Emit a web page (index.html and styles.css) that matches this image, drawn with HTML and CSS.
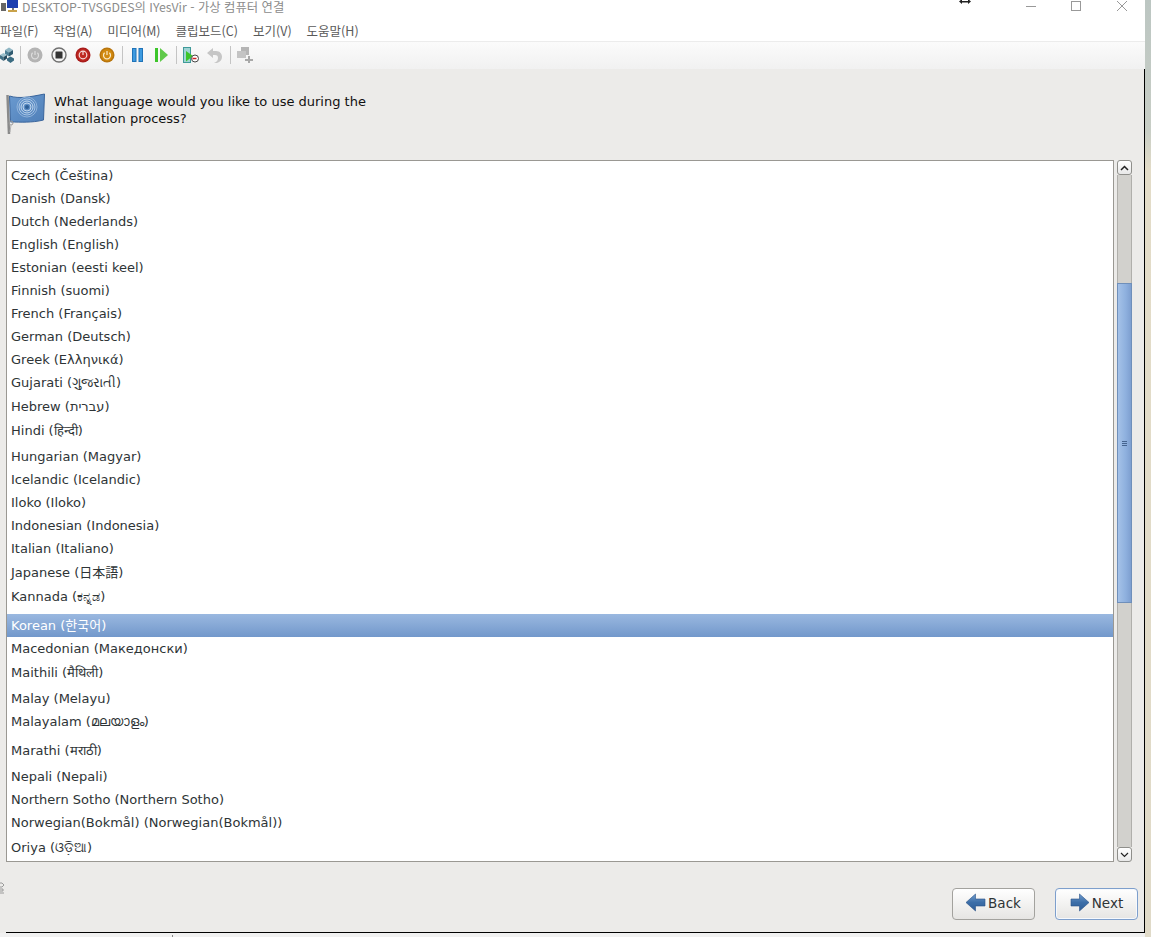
FILE: index.html
```html
<!DOCTYPE html>
<html lang="ko">
<head>
<meta charset="utf-8">
<title>IYesVir</title>
<link rel="stylesheet" href="styles.css">
</head>
<body>
<div class="window">
  <header class="titlebar">
    <svg class="appicon" width="20" height="14" viewBox="0 0 20 14"><rect x="0" y="3" width="5" height="8" fill="#666"/><rect x="6" y="0" width="11" height="8" fill="#1c3fb0"/><rect x="11" y="8" width="2" height="3" fill="#777"/><rect x="7" y="10" width="9" height="2" fill="#c9a24a"/></svg>
    <span class="title">DESKTOP-TVSGDES의 IYesVir - 가상 컴퓨터 연결</span>
    <svg class="resizecur" width="12" height="8" viewBox="0 0 12 8"><path d="M0 3.500 3 1v2h6V1l3 2.500L9 6V4.500H3V6z" fill="#222"/></svg>
    <div class="winbtns">
      <svg width="10" height="11" viewBox="0 0 10 11"><path d="M0 6.500h10" stroke="#999" fill="none"/></svg>
      <svg width="10" height="11" viewBox="0 0 10 11"><rect x=".5" y="1.500" width="9" height="9" stroke="#999" fill="none"/></svg>
      <svg class="closebtn" width="10" height="11" viewBox="0 0 10 11"><path d="M0 1l10 10M10 1 0 11" stroke="#999" fill="none"/></svg>
    </div>
  </header>
  <nav class="menubar">
    <span>파일(F)</span><span>작업(A)</span><span>미디어(M)</span><span>클립보드(C)</span><span>보기(V)</span><span>도움말(H)</span>
  </nav>
  <div class="toolbar">
    <svg class="tool t-cube" width="14" height="16" viewBox="0 0 14 16"><path d="M5 3l4-2.500L13 3 9 5.500z" fill="#8fb6c4"/><path d="M5 3v4l4 2.500v-4z" fill="#4d7f95"/><path d="M13 3v4L9 9.500v-4z" fill="#2f5a70"/><path d="M0 8l3.500-2L7 8l-3.500 2z" fill="#9cc0cc"/><path d="M0 8v3.500L3.500 14v-4z" fill="#3f6f85"/><path d="M7 8v3.500L3.500 14v-4z" fill="#24485c"/><path d="M7 11.500l3.500-2 3.500 2v2L10.500 16 7 13.500z" fill="#3b6c82"/></svg>
    <i class="sep s1"></i>
    <svg class="tool t-gray" width="16" height="16" viewBox="0 0 16 16"><circle cx="8" cy="8" r="7.500" fill="#b4b4b4"/><path d="M5.600 5.800a3.500 3.500 0 1 0 4.800 0" stroke="#ddd" stroke-width="1.200" fill="none"/><path d="M8 4v4" stroke="#ddd" stroke-width="1.200"/></svg>
    <svg class="tool t-stop" width="16" height="16" viewBox="0 0 16 16"><circle cx="8" cy="8" r="7" fill="#f4f4f4" stroke="#707070" stroke-width="1.400"/><rect x="4.500" y="4.500" width="7" height="7" rx=".5" fill="#333"/></svg>
    <svg class="tool t-red" width="16" height="16" viewBox="0 0 16 16"><circle cx="8" cy="8" r="7.500" fill="#a91c1c"/><circle cx="8" cy="8" r="6" fill="#bf2a22"/><circle cx="8" cy="8" r="3.800" stroke="#f6dcdc" stroke-width="1.200" fill="none"/><path d="M8 4v4" stroke="#f6dcdc" stroke-width="1.200"/></svg>
    <svg class="tool t-orange" width="16" height="16" viewBox="0 0 16 16"><circle cx="8" cy="8" r="7.500" fill="#b8750e"/><circle cx="8" cy="8" r="6" fill="#d1890f"/><path d="M5.600 5.800a3.500 3.500 0 1 0 4.800 0" stroke="#fbeccb" stroke-width="1.200" fill="none"/><path d="M8 4v4" stroke="#fbeccb" stroke-width="1.200"/></svg>
    <i class="sep s2"></i>
    <svg class="tool t-pause" width="11" height="14" viewBox="0 0 11 14"><rect x=".5" y=".5" width="3.500" height="13" fill="#3d9ae0" stroke="#1f73b8"/><rect x="7" y=".5" width="3.500" height="13" fill="#3d9ae0" stroke="#1f73b8"/></svg>
    <svg class="tool t-play" width="13" height="14" viewBox="0 0 13 14"><rect x="0" y="0" width="3" height="14" fill="#3cc52a"/><path d="M5 0l8 7-8 7z" fill="#5fc94a"/></svg>
    <i class="sep s3"></i>
    <svg class="tool t-snap" width="16" height="17" viewBox="0 0 16 17"><rect x=".5" y=".5" width="7" height="15" fill="#9fd4d4" stroke="#3f9a9a"/><path d="M3 4l7 5-7 5.500z" fill="#3cc52a"/><circle cx="12" cy="11.500" r="3.500" fill="#fff" stroke="#444"/><path d="M9.500 11.500h4" stroke="#c22" stroke-width="1.500"/></svg>
    <svg class="tool t-undo" width="16" height="15" viewBox="0 0 16 15"><path d="M0 5 6 0v3h3c4 0 6 3 6 6s-2 5-5 6H7c3-1 4-3 4-5s-1-3-3-3H6v3z" fill="#c6c6c6"/></svg>
    <i class="sep s4"></i>
    <svg class="tool t-share" width="16" height="16" viewBox="0 0 16 16"><rect x="4" y="0" width="8" height="8" fill="#b5b5b5"/><rect x="0" y="4" width="9" height="7" fill="#c4c4c4"/><path d="M8 12h8v2H8zM11 9h2v7h-2z" fill="#a8a8a8"/></svg>
  </div>
  <main class="content">
    <section class="question">
      <svg class="flag" width="40" height="42" viewBox="0 0 40 42">
        <defs><linearGradient id="flagfill" x1="0" y1="0" x2="1" y2="1"><stop offset="0" stop-color="#6a9ad0"/><stop offset="1" stop-color="#4f7fb8"/></linearGradient></defs>
        <path d="M1.500 3 3 42" stroke="#8a8a8a" stroke-width="2.500" fill="none"/>
        <path d="M3.500 4c10 3 20 1 35-2l-1 26c-12 3-23 2-33 2z" fill="url(#flagfill)" stroke="#3a659c"/>
        <circle cx="21" cy="15" r="10" fill="none" stroke="#8fb2da"/>
        <circle cx="21" cy="15" r="8" fill="none" stroke="#a9c6e6"/>
        <circle cx="21" cy="15" r="6" fill="none" stroke="#c3d8ee"/>
        <circle cx="21" cy="15" r="4" fill="none" stroke="#c3d8ee"/>
        <circle cx="21" cy="15" r="2" fill="#2f5f96"/>
        <circle cx="5" cy="31" r="2" fill="none" stroke="#9a9a9a"/>
        <path d="M5 33 4 40" stroke="#b5b5b5" fill="none"/>
      </svg>
      <p class="prompt">What language would you like to use during the<br>installation process?</p>
    </section>
    <section class="picker">
      <div class="list">
        <div class="row r23">Czech (Čeština)</div>
        <div class="row r23">Danish (Dansk)</div>
        <div class="row r23">Dutch (Nederlands)</div>
        <div class="row r23">English (English)</div>
        <div class="row r23">Estonian (eesti keel)</div>
        <div class="row r23">Finnish (suomi)</div>
        <div class="row r23">French (Français)</div>
        <div class="row r23">German (Deutsch)</div>
        <div class="row r23">Greek (Ελληνικά)</div>
        <div class="row r24">Gujarati (ગુજરાતી)</div>
        <div class="row r24">Hebrew (עברית)</div>
        <div class="row r26">Hindi (हिन्दी)</div>
        <div class="row r23">Hungarian (Magyar)</div>
        <div class="row r23">Icelandic (Icelandic)</div>
        <div class="row r23">Iloko (Iloko)</div>
        <div class="row r23">Indonesian (Indonesia)</div>
        <div class="row r23">Italian (Italiano)</div>
        <div class="row r24 low">Japanese (日本語)</div>
        <div class="row r30 low">Kannada (ಕನ್ನಡ)</div>
        <div class="row r23 selected">Korean (한국어)</div>
        <div class="row r23">Macedonian (Македонски)</div>
        <div class="row r27 low">Maithili (मैथिली)</div>
        <div class="row r23">Malay (Melayu)</div>
        <div class="row r29">Malayalam (മലയാളം)</div>
        <div class="row r26">Marathi (मराठी)</div>
        <div class="row r23">Nepali (Nepali)</div>
        <div class="row r23">Northern Sotho (Northern Sotho)</div>
        <div class="row r24">Norwegian(Bokmål) (Norwegian(Bokmål))</div>
        <div class="row r26 low">Oriya (ଓଡ଼ିଆ)</div>
      </div>
      <div class="scrollbar">
        <div class="sb-btn">
          <svg width="9" height="6" viewBox="0 0 9 6"><path d="M1 5l3.500-3.500L8 5" stroke="#222" stroke-width="1.500" fill="none"/></svg>
        </div>
        <div class="sb-track">
          <div class="sb-thumb"><i></i><i></i><i></i></div>
        </div>
        <div class="sb-btn">
          <svg width="9" height="6" viewBox="0 0 9 6"><path d="M1 1l3.500 3.500L8 1" stroke="#222" stroke-width="1.200" fill="none"/></svg>
        </div>
      </div>
    </section>
    <footer class="actions">
      <svg class="stray" width="4" height="12" viewBox="0 0 4 12"><path d="M0 1h2l2 2-2 2H0M0 7h3v2H0M0 11h4" stroke="#9a9a9a" fill="none"/></svg>
      <button class="btn">
        <svg width="20" height="20" viewBox="0 0 20 20"><defs><linearGradient id="arrowfill" x1="0" y1="0" x2="0" y2="1"><stop offset="0" stop-color="#6f9ccd"/><stop offset=".5" stop-color="#3c6ea8"/><stop offset="1" stop-color="#2f5e98"/></linearGradient></defs><path d="M0 9.500 9.500 1v5H19v7H9.500v5z" fill="url(#arrowfill)" stroke="#2a5288" stroke-width=".6"/></svg>
        <span>Back</span>
      </button>
      <button class="btn focused">
        <svg width="20" height="20" viewBox="0 0 20 20"><path d="M19 9.500 9.500 1v5H1v7h8.500v5z" fill="url(#arrowfill)" stroke="#2a5288" stroke-width=".6"/></svg>
        <span>Next</span>
      </button>
    </footer>
  </main>
  <div class="statusline"><i class="tick"></i></div>
</div>
</body>
</html>
```
FILE: styles.css
```css
* { box-sizing: border-box; }
html, body { margin: 0; height: 100%; }
body {
  background: linear-gradient(#bcc6c2 0, #c8cec6 130px, #e3dcc8 170px, #e0dac8 100%);
  overflow: hidden;
  font-family: "Noto Sans CJK KR", "Liberation Sans", sans-serif;
}
.window { width: 1145px; height: 937px; display: flex; flex-direction: column; background: #fff; }

.titlebar { height: 21px; flex: none; display: flex; align-items: flex-start; position: relative; background: #fff; }
.appicon { margin: 0 0 0 1px; flex: none; }
.title { margin: 1px 0 0 1px; font-size: 12.350px; line-height: 13px; color: #8c8c8c; white-space: nowrap; }
.resizecur { position: absolute; left: 959px; top: -2px; }
.winbtns { position: absolute; right: 18px; top: 0; display: flex; gap: 35px; }
.closebtn { margin-left: 1px; }

.menubar { height: 20px; flex: none; display: flex; gap: 15px; font-size: 12.500px; line-height: 20px; color: #5a5a5a; white-space: nowrap; }

.toolbar { height: 28px; flex: none; display: flex; align-items: center; padding-bottom: 1px; border-top: 1px solid #ececec; background: linear-gradient(#fbfbfb, #f1f1f1); }
.tool { flex: none; }
.sep { width: 1px; height: 18px; background: #c4c4c4; flex: none; }
.t-cube { margin-left: 0; }
.s1 { margin-left: 6px; }
.t-gray { margin-left: 6px; }
.t-stop { margin-left: 8px; }
.t-red { margin-left: 8px; }
.t-orange { margin-left: 8px; }
.s2 { margin-left: 7px; }
.t-pause { margin-left: 9px; }
.t-play { margin-left: 12px; }
.s3 { margin-left: 8px; }
.t-snap { margin-left: 6px; }
.t-undo { margin-left: 8px; }
.s4 { margin-left: 7px; }
.t-share { margin-left: 6px; }

.content { flex: 1; display: flex; flex-direction: column; background: #ecebe9; border-right: 1px solid #000; min-height: 0; padding: 0 0 0 6px; }
.question { height: 91px; flex: none; display: flex; align-items: flex-start; padding-top: 23px; }
.flag { flex: none; }
.prompt { margin: 1px 0 0 8px; font: 13px/17px "DejaVu Sans", sans-serif; color: #111; }

.picker { height: 702px; flex: none; display: flex; padding-right: 20px; }
.list { flex: none; width: 1108px; height: 702px; border: 1px solid #9a9893; background: #fff; padding-top: 3px; overflow: hidden; }
.row { padding: 3px 0 0 4px; font: 13px/17px "DejaVu Sans", "Noto Sans CJK KR", sans-serif; color: #2e3436; white-space: nowrap; }
.low { padding-top: 4px; }
.r23 { height: 23px; }
.r24 { height: 24px; }
.r26 { height: 26px; }
.r27 { height: 27px; }
.r29 { height: 29px; }
.r30 { height: 30px; }
.selected { color: #fff; background: linear-gradient(#9ab8e0, #7298cb); }

.scrollbar { width: 15px; margin-left: 3px; display: flex; flex-direction: column; flex: none; }
.sb-btn { height: 15px; flex: none; background: linear-gradient(#fff, #e8e8e8); border: 1px solid #8f8f8b; border-radius: 3px; display: flex; align-items: center; justify-content: center; }
.sb-track { flex: 1; background: #d2d1cd; border: 1px solid #b0afab; border-width: 0 1px; display: flex; flex-direction: column; padding-top: 108px; padding-bottom: 244px; }
.sb-thumb { flex: 1; margin: 0 -1px; background: linear-gradient(90deg, #a5c2e8, #8eb0de 60%, #7e9fd0); border: 1px solid #6f8fba; display: flex; flex-direction: column; justify-content: center; align-items: center; gap: 1px; }
.sb-thumb i { display: block; width: 5px; height: 1px; background: #46648f; }

.actions { height: 71px; flex: none; display: flex; align-items: flex-start; gap: 20px; padding: 26px 6px 0 0; border-bottom: 1px solid #000; }
.stray { flex: none; margin: -6px auto 0 -6px; }
.btn { flex: none; width: 83px; height: 32px; display: flex; align-items: center; justify-content: center; gap: 2px; padding: 0 0 2px; background: linear-gradient(#fff, #e6e5e3); border: 1px solid #a3a29e; border-radius: 4px; font: 13.500px "DejaVu Sans", sans-serif; color: #2e3436; }
.focused { border-color: #7e9fcc; box-shadow: inset 0 0 0 1px #f6f9fd; }

.statusline { height: 4px; flex: none; background: #f1f1f1; padding: 2px 0 0 172px; }
.tick { display: block; width: 1px; height: 2px; background: #888; }
```
